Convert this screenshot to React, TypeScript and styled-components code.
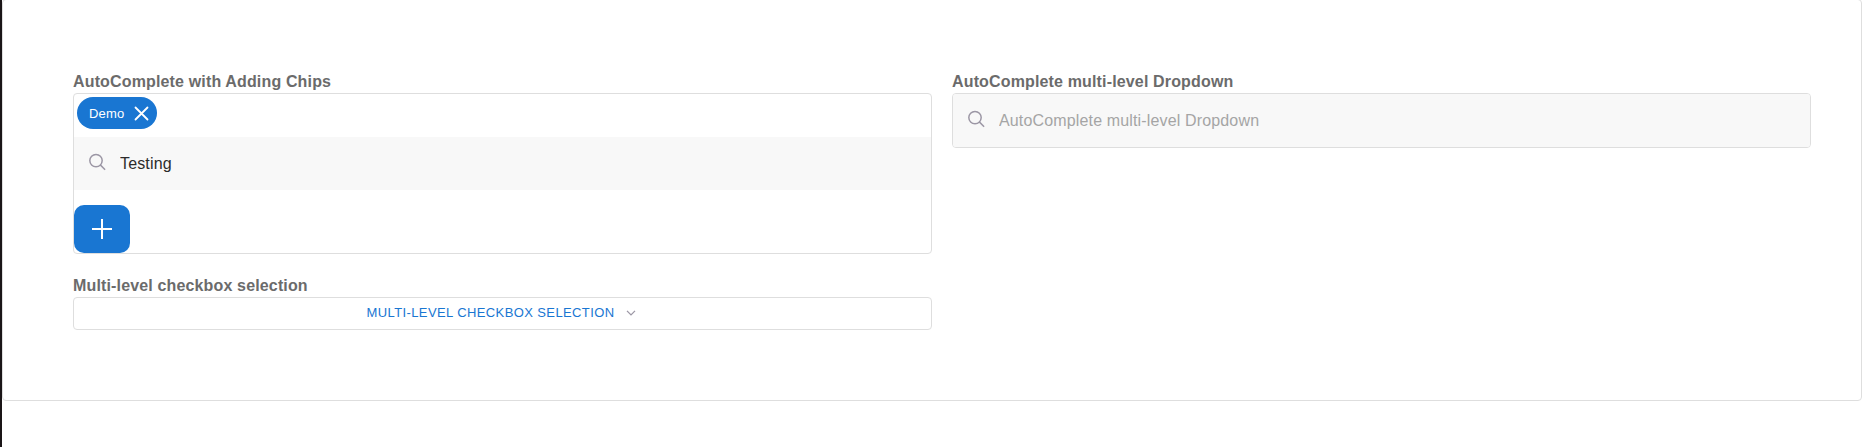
import React from "react";
import styled, { createGlobalStyle } from "styled-components";

const GlobalStyle = createGlobalStyle`
  * { box-sizing: border-box; }
  body { margin: 0; background: #fff; overflow: hidden; font-family: "Liberation Sans", Arial, sans-serif; }
`;

const Page = styled.main`
  height: 447px;
  border-left: 2px solid #1a1517;
  overflow: hidden;
`;

const Panel = styled.section`
  height: 402px;
  margin-top: -1px;
  padding: 73px 50px 0 70px;
  border: 1px solid #dedede;
  border-radius: 4px;
  background: #fff;
  display: grid;
  grid-template-columns: 859px 859px;
  column-gap: 20px;
  align-items: start;
`;

const Column = styled.div`
  display: flex;
  flex-direction: column;
  gap: 23px;
`;

const Field = styled.div`
  display: flex;
  flex-direction: column;
`;

const Label = styled.label`
  height: 20px;
  line-height: 18px;
  font-size: 16px;
  font-weight: 700;
  letter-spacing: 0.15px;
  color: #6b6b6b;
`;

const Box = styled.div`
  border: 1px solid #dedede;
  border-radius: 4px;
  overflow: hidden;
  display: flex;
  flex-direction: column;
  align-items: flex-start;
`;

const Chip = styled.span`
  display: flex;
  align-items: center;
  justify-content: space-between;
  width: 80px;
  height: 32px;
  margin: 3px 3px 8px;
  padding: 0 8px 0 12px;
  border-radius: 16px;
  background: #1976d2;
  color: #fff;
  font-size: 13px;
  letter-spacing: 0.15px;
`;

const SearchBar = styled.div`
  width: 100%;
  height: 53px;
  padding-left: 14px;
  display: flex;
  align-items: center;
  gap: 14px;
  background: #f8f8f8;

  svg { margin-top: -3px; flex: none; }
`;

const SearchInput = styled.input`
  flex: 1;
  border: 0;
  padding: 0;
  outline: 0;
  background: transparent;
  font: 16px "Liberation Sans", Arial, sans-serif;
  letter-spacing: 0.15px;
  color: #2b2b2b;

  &::placeholder { color: #a5a5a5; opacity: 1; }
`;

const AddButton = styled.button`
  width: 56px;
  height: 48px;
  margin-top: 15px;
  padding: 0;
  border: 0;
  border-radius: 10px;
  background: #1976d2;
  display: flex;
  align-items: center;
  justify-content: center;
`;

const SelectButton = styled.button`
  height: 33px;
  padding: 0 0 2px;
  border: 1px solid #dedede;
  border-radius: 4px;
  background: #fff;
  display: flex;
  align-items: center;
  justify-content: center;
  gap: 12px;
  font: 13px "Liberation Sans", Arial, sans-serif;
  letter-spacing: 0.39px;
  text-transform: uppercase;
  color: #1976d2;
`;

const SearchIcon = () => (
  <svg width="18" height="18" viewBox="0 0 18 18" fill="none" stroke="#9c97a5" strokeWidth="1.5">
    <circle cx="8" cy="7.6" r="6.2" />
    <path d="M12.3 11.9 17.1 16.7" />
  </svg>
);

export default function App() {
  return (
    <Page>
      <GlobalStyle />
      <Panel>
        <Column>
          <Field>
            <Label htmlFor="chips">AutoComplete with Adding Chips</Label>
            <Box>
              <Chip>
                Demo
                <svg width="15" height="15" viewBox="0 0 15 15" stroke="#fff" strokeWidth="1.8" strokeLinecap="round">
                  <path d="M1.5 1.5 13.5 13.5M13.5 1.5 1.5 13.5" />
                </svg>
              </Chip>
              <SearchBar>
                <SearchIcon />
                <SearchInput id="chips" defaultValue="Testing" />
              </SearchBar>
              <AddButton aria-label="Add">
                <svg width="20" height="20" viewBox="0 0 20 20" stroke="#fff" strokeWidth="2">
                  <path d="M10 0V20M0 10H20" />
                </svg>
              </AddButton>
            </Box>
          </Field>
          <Field>
            <Label as="span">Multi-level checkbox selection</Label>
            <SelectButton>
              Multi-level checkbox selection
              <svg width="12" height="6" viewBox="0 0 12 6" fill="none" stroke="#9c97a5" strokeWidth="1.3">
                <path d="M1 0.9 5 4.9 9 0.9" />
              </svg>
            </SelectButton>
          </Field>
        </Column>
        <Field>
          <Label htmlFor="dropdown">AutoComplete multi-level Dropdown</Label>
          <Box>
            <SearchBar>
              <SearchIcon />
              <SearchInput id="dropdown" placeholder="AutoComplete multi-level Dropdown" />
            </SearchBar>
          </Box>
        </Field>
      </Panel>
    </Page>
  );
}
